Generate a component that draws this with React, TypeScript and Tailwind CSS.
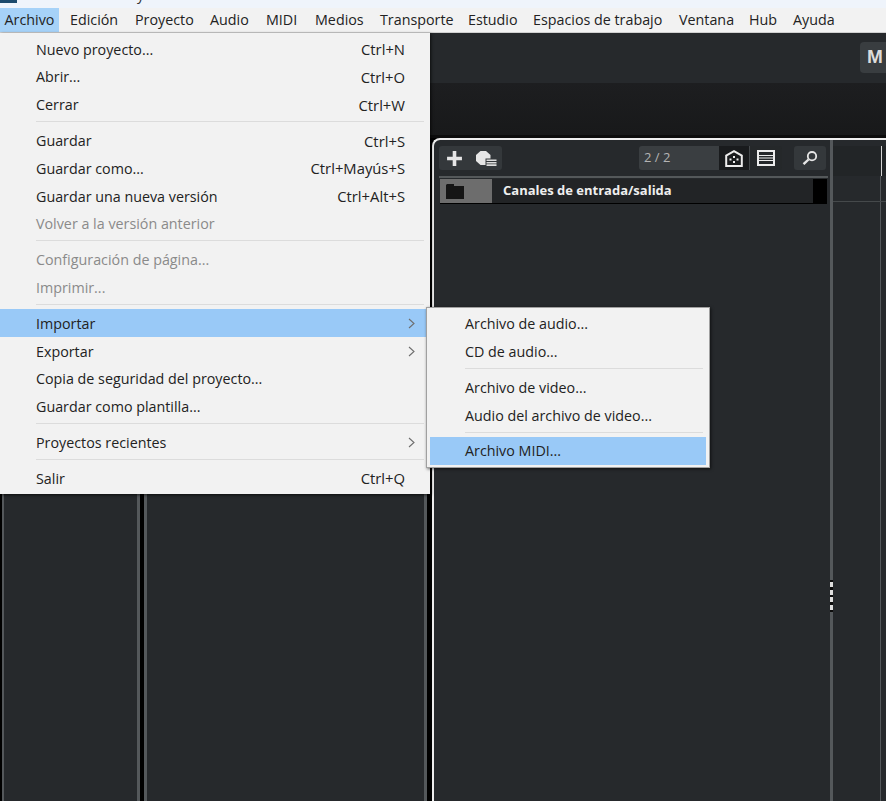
const FONT = '"Open Sans", "Noto Sans", sans-serif';

type Item = { label: string; shortcut?: string; disabled?: boolean; active?: boolean; sub?: boolean };

const FILE_MENU: Item[][] = [
  [
    { label: 'Nuevo proyecto...', shortcut: 'Ctrl+N' },
    { label: 'Abrir...', shortcut: 'Ctrl+O' },
    { label: 'Cerrar', shortcut: 'Ctrl+W' },
  ],
  [
    { label: 'Guardar', shortcut: 'Ctrl+S' },
    { label: 'Guardar como...', shortcut: 'Ctrl+Mayús+S' },
    { label: 'Guardar una nueva versión', shortcut: 'Ctrl+Alt+S' },
    { label: 'Volver a la versión anterior', disabled: true },
  ],
  [
    { label: 'Configuración de página...', disabled: true },
    { label: 'Imprimir...', disabled: true },
  ],
  [
    { label: 'Importar', active: true, sub: true },
    { label: 'Exportar', sub: true },
    { label: 'Copia de seguridad del proyecto...' },
    { label: 'Guardar como plantilla...' },
  ],
  [{ label: 'Proyectos recientes', sub: true }],
  [{ label: 'Salir', shortcut: 'Ctrl+Q' }],
];

const IMPORT_MENU: Item[][] = [
  [{ label: 'Archivo de audio...' }, { label: 'CD de audio...' }],
  [{ label: 'Archivo de video...' }, { label: 'Audio del archivo de video...' }],
  [{ label: 'Archivo MIDI...', active: true }],
];

const MENU_BAR = [
  { label: 'Edición', w: 'w-[65px]' },
  { label: 'Proyecto', w: 'w-[75px]' },
  { label: 'Audio', w: 'w-[56px]' },
  { label: 'MIDI', w: 'w-[49px]' },
  { label: 'Medios', w: 'w-[65px]' },
  { label: 'Transporte', w: 'w-[88px]' },
  { label: 'Estudio', w: 'w-[65px]' },
  { label: 'Espacios de trabajo', w: 'w-[146px]' },
  { label: 'Ventana', w: 'w-[70px]' },
  { label: 'Hub', w: 'w-[44px]' },
  { label: 'Ayuda', w: 'w-[50px]' },
];

function MenuRow({ item, className }: { item: Item; className: string }) {
  return (
    <div className={`flex h-[27.8px] items-center pr-[25px] ${className} ${item.active ? 'bg-[#99c9f7]' : ''} ${item.disabled ? 'text-[#8a8a8a]' : 'text-[#222222]'}`}>
      <span className="flex-1">{item.label}</span>
      {item.shortcut && <span className="text-[14.8px]">{item.shortcut}</span>}
      {item.sub && (
        <svg width="7" height="11" viewBox="0 0 7 11" fill="none" className="-mr-[10px]">
          <path d="M1 1l5 4.500-5 4.500" stroke="#6e6e6e" strokeWidth="1.100" />
        </svg>
      )}
    </div>
  );
}

function Separator({ inset }: { inset: string }) {
  return (
    <div className={`flex h-2 items-center pb-[2px] ${inset}`}>
      <div className="h-px w-full bg-[#dcdcdc]" />
    </div>
  );
}

function PanelToolbar() {
  return (
    <div className="flex h-[24px] items-stretch pl-[5px] pr-[4px]">
      <div className="flex w-[63px] items-center rounded-[3px] bg-[#34383b] pl-[7px]">
        <svg width="17" height="17" viewBox="0 0 16 16"><path d="M6.300 1h3.400v5.300H15v3.400H9.700V15H6.300V9.700H1V6.300h5.300z" fill="#e6e6e6" /></svg>
        <svg width="21" height="15" viewBox="0 0 21 15" className="ml-[13px]">
          <path d="M4.500 0h5.500L14.500 4v3.500H9.500V14h-5L0 10V4z" fill="#e6e6e6" />
          <path d="M10.500 8.500h10v1.500h-10zM10.500 11h10v1.500h-10zM10.500 13.300h10V15h-10z" fill="#dddddd" />
        </svg>
      </div>
      <div className="ml-[137px] flex w-[143px] overflow-hidden rounded-[3px]">
        <div className="flex w-[80px] items-center bg-[#3a3e41] pl-[5px] text-[13px] text-[#b4b4b4]">2 / 2</div>
        <div className="flex w-[30px] items-center justify-center bg-[#191b1d]">
          <svg width="18" height="17" viewBox="0 0 18 17">
            <path d="M9 1.200 16.800 5.500V16H1.200V5.500z" fill="none" stroke="#ececec" strokeWidth="2" />
            <path d="M4.500 8.500h2v2h-2zM8 6h2v2H8zM11.500 8.500h2v2h-2zM8 11h2v2H8z" fill="#ececec" />
          </svg>
        </div>
        <div className="flex flex-1 items-center justify-center border-l border-[#44484b] bg-[#25282a]">
          <svg width="18" height="16" viewBox="0 0 18 16">
            <rect x="1" y="1" width="16" height="14" fill="none" stroke="#ececec" strokeWidth="2" />
            <path d="M1 5.500h16M1 8h16M1 10.500h16" stroke="#ececec" strokeWidth="1.200" />
          </svg>
        </div>
      </div>
      <div className="ml-[12px] flex w-[32px] items-center justify-center rounded-[3px] bg-[#34383b]">
        <svg width="16" height="14" viewBox="0 0 16 14" fill="none" stroke="#e6e6e6">
          <circle cx="10" cy="5.200" r="4.200" strokeWidth="1.800" />
          <path d="M6.500 8.500 1.500 13.200" strokeWidth="2.400" />
        </svg>
      </div>
    </div>
  );
}

function TrackRow() {
  return (
    <div className="ml-[6px] mr-[3px] mt-px flex h-[25px] items-start bg-black">
      <div className="flex h-[24px] w-[52px] items-center bg-[#6d6d6d] pl-[6px]">
        <svg width="18" height="15" viewBox="0 0 18 15"><path d="M1 0h7v2h10v13H0V1z" fill="#151515" /></svg>
      </div>
      <div className="flex h-[24px] w-[321px] items-center bg-[#222426] pl-[11px] text-[13px] font-bold text-[#eeeeee]">
        Canales de entrada/salida
      </div>
    </div>
  );
}

export default function App() {
  return (
    <div className="relative flex h-[801px] w-[886px] flex-col overflow-hidden bg-[#26292c] text-[14.3px]" style={{ fontFamily: FONT }}>
      {/* barra de título, cortada arriba */}
      <div className="flex h-2 shrink-0 items-start overflow-hidden bg-[#eff4fb]">
        <div className="h-[3px] w-[17px] bg-[#1c4a6c]" />
        <span className="ml-[120px] -mt-[16px] text-[#333333]">y</span>
      </div>

      {/* menú */}
      <div className="flex h-[25px] shrink-0 items-center border-b border-[#d0d0d0] bg-[#f2f2f2] text-[#222222]">
        <div className="flex h-full w-[59px] items-center justify-center bg-[#a6d2f8]">Archivo</div>
        <div className="flex pl-[11px]">
          {MENU_BAR.map((m) => <span key={m.label} className={m.w}>{m.label}</span>)}
        </div>
      </div>

      {/* cabecera oscura */}
      <div className="flex h-[50px] shrink-0 items-start justify-end bg-[#26292c] pt-[9px]">
        <div className="flex h-[31px] w-[26px] items-center rounded-l-[4px] bg-[#393d40] pl-[7px] text-[19px] font-bold text-[#dcdcdc]" style={{ fontFamily: '"Liberation Sans", sans-serif' }}>
          M
        </div>
      </div>
      <div className="h-[52px] shrink-0 bg-gradient-to-b from-[#1d1e20] to-[#18191a]" />
      <div className="h-[3px] shrink-0 bg-[#0c0c0c]" />

      {/* zona inferior */}
      <div className="flex min-h-0 flex-1 bg-black">
        <div className="mt-[2px] flex w-[140px] pl-[2px]">
          <div className="flex-1 border-y-0 border-l-2 border-r-[3px] border-[#54585b] bg-[#26292c]" />
        </div>
        <div className="w-[4px]" />
        <div className="mt-[2px] w-[283px] border-x-[3px] border-[#54585b] bg-[#26292c]" />
        <div className="w-[5px]" />

        {/* panel principal */}
        <div className="flex min-w-0 flex-1 rounded-tl-[8px] border-l-2 border-t-2 border-[#eeeeee] bg-[#26292c]">
          <div className="w-[396px] pt-[6px]">
            <PanelToolbar />
            <div className="ml-[5px] mr-[2px] mt-[6px] h-[2px] bg-[#54585a]" />
            <TrackRow />
          </div>
          <div className="relative w-[3px] bg-[#54585b]">
            {/* tirador del divisor */}
            <div className="absolute left-0 top-[440px] flex h-[32px] w-[3px] flex-col justify-around bg-[#0c0c0c] py-[1px]">
              <div className="h-[5px] bg-[#dddddd]" />
              <div className="h-[5px] bg-[#dddddd]" />
              <div className="h-[5px] bg-[#dddddd]" />
              <div className="h-[5px] bg-[#dddddd]" />
            </div>
          </div>
          <div className="flex-1 pt-[6px]">
            <div className="flex h-[30px] justify-end bg-[#222527] pr-[4px]">
              <div className="h-full w-px bg-[#d5d5d5]" />
            </div>
            <div className="flex h-[26px] justify-end border-b border-[#45494b] pr-[5px]">
              <div className="h-full w-px bg-[#54585b]" />
            </div>
            <div className="ml-auto mr-[5px] h-[calc(100%-56px)] w-px bg-[#54585b]" />
          </div>
        </div>
      </div>

      {/* menú Archivo */}
      <div className="absolute left-0 top-[33px] w-[430px] bg-[#f2f2f2] pb-[2px] pt-[2px] shadow-[1px_1px_3px_rgba(0,0,0,0.7)]">
        {FILE_MENU.map((group, i) => (
          <div key={i}>
            {i > 0 && <Separator inset="pl-[36px] pr-[6px]" />}
            {group.map((item) => <MenuRow key={item.label} item={item} className="pl-[36px] pt-px" />)}
          </div>
        ))}
      </div>

      {/* submenú Importar */}
      <div className="absolute left-[426px] top-[307px] w-[284px] border border-[#a0a0a0] bg-[#f2f2f2] px-[3px] py-[2px] shadow-[1px_1px_3px_rgba(0,0,0,0.6)]">
        {IMPORT_MENU.map((group, i) => (
          <div key={i}>
            {i > 0 && <Separator inset="pl-[35px] pr-[3px]" />}
            {group.map((item) => <MenuRow key={item.label} item={item} className="pl-[35px]" />)}
          </div>
        ))}
      </div>
    </div>
  );
}
